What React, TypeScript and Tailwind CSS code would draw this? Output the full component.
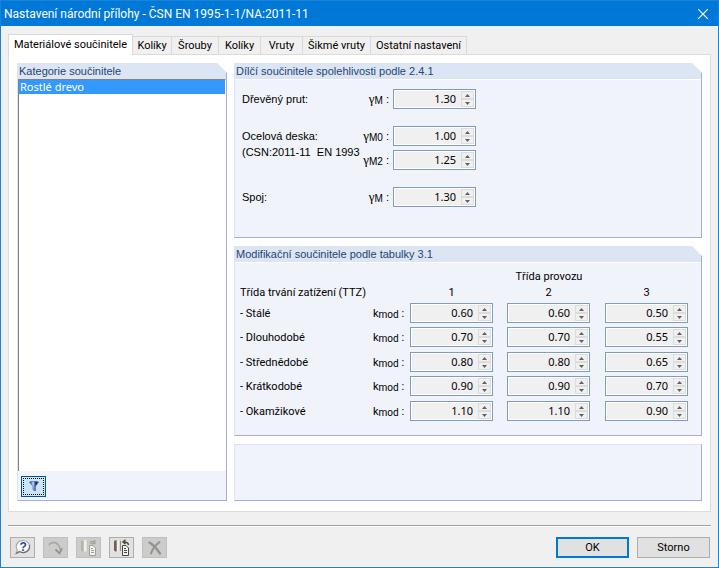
import { useState } from 'react'
import type { ReactNode } from 'react'

const tabs = [
  { label: 'Kolíky', w: 'w-[39px]' },
  { label: 'Šrouby', w: 'w-[47px]' },
  { label: 'Kolíky', w: 'w-[42px]' },
  { label: 'Vruty', w: 'w-[42px]' },
  { label: 'Šikmé vruty', w: 'w-[68px]' },
  { label: 'Ostatní nastavení', w: 'w-[96px]' },
]

const kmod = [
  { label: 'Stálé', vals: ['0.60', '0.60', '0.50'] },
  { label: 'Dlouhodobé', vals: ['0.70', '0.70', '0.55'] },
  { label: 'Střednědobé', vals: ['0.80', '0.80', '0.65'] },
  { label: 'Krátkodobé', vals: ['0.90', '0.90', '0.70'] },
  { label: 'Okamžikové', vals: ['1.10', '1.10', '0.90'] },
]

const SpinField = ({ id, initial, label }: { id: string; initial: string; label?: string }) => {
  const [val, setVal] = useState(initial)
  const step = (d: number) => setVal(v => (Number(v) + d).toFixed(2))
  return (
    <div className="flex h-5 w-[83px] border border-[#7f9db9] bg-[#f0f0f0] p-px outline outline-1 -outline-offset-2 outline-white">
      <input id={id} aria-label={label} value={val} onChange={e => setVal(e.target.value)}
        className="min-w-0 flex-1 bg-transparent pr-[5px] text-right font-['Noto_Sans',sans-serif] outline-none" />
      <div className="flex w-[13px] flex-col border border-[#dcdcdc] bg-[#f0f0f0]">
        <button type="button" aria-label="+" onClick={() => step(0.05)} className="flex flex-1 items-center justify-center border-b border-[#dcdcdc]">
          <svg width="5" height="3" viewBox="0 0 5 3" fill="#606060"><path d="M2.5 0 5 3H0z" /></svg>
        </button>
        <button type="button" aria-label="-" onClick={() => step(-0.05)} className="flex flex-1 items-center justify-center border-t border-[#dcdcdc]">
          <svg width="5" height="3" viewBox="0 0 5 3" fill="#606060"><path d="M0 0h5L2.5 3z" /></svg>
        </button>
      </div>
    </div>
  )
}

const Panel = ({ title, className = '', children }: { title: string; className?: string; children: ReactNode }) => (
  <section className={`flex flex-col border-r border-b border-l border-[#a9a9e8] border-l-[#dce5f3] bg-[#f0f3f9] [clip-path:polygon(0_0,calc(100%-10px)_0,100%_10px,100%_100%,0_100%)] ${className}`}>
    <h2 className="h-4 bg-[#dce5f4] px-px font-['Liberation_Sans',sans-serif] leading-4 text-[#1e4670]">{title}</h2>
    {children}
  </section>
)

const GammaRow = ({ id, sub, val }: { id: string; sub: string; val: string }) => (
  <div className="flex">
    <label htmlFor={id} className="flex h-5 w-8 items-center justify-end pr-1">
      <span className="font-['Liberation_Serif',serif] text-[13px]">γ</span>
      <span className="pt-1 font-['Liberation_Sans',sans-serif] text-[10px]">{sub}</span>
      <span className="pl-[3px]">:</span>
    </label>
    <SpinField id={id} initial={val} />
  </div>
)

const ToolButton = ({ label, disabled, children }: { label: string; disabled?: boolean; children: ReactNode }) => (
  <button type="button" aria-label={label} disabled={disabled}
    className="flex h-[21px] w-[25px] items-center justify-center border border-[#adadad] bg-[#e1e1e1] disabled:border-[#bfbfbf] disabled:bg-[#cccccc]">
    {children}
  </button>
)

const DbIcon = ({ id, edge, line, back }: { id: string; edge: string; line: string; back?: boolean }) => (
  <svg width="17" height="17" viewBox="0 0 17 17" fill="none">
    <defs>
      <linearGradient id={id}>
        <stop offset="0" stopColor={edge} />
        <stop offset=".3" stopColor={edge} />
        <stop offset=".5" stopColor="#f2eee4" />
        <stop offset=".75" stopColor="#f2eee4" />
        <stop offset="1" stopColor={edge} />
      </linearGradient>
    </defs>
    <path d="M1 2.5Q1 1 4.5 1T8 2.5v8.500Q8 12.500 4.500 12.500T1 11z" fill={`url(#${id})`} />
    <path d="M9.500 6.500h3.500l2.500 2.500v7.500h-6z" fill="#f3f3ee" stroke={line} />
    <path d="M11 9.500h2M11 11.500h3M11 13.500h3" stroke={line} />
    {back
      ? <path d="M15.500 6Q15 2.500 10 3M12.500 .8 10 3l2.500 2" stroke={line} strokeWidth="1.5" />
      : <path d="M10 4.500Q11 1.500 14 3M14.800 1v3.700h-3.300" stroke={line} strokeWidth="1.3" />}
  </svg>
)

export default function App() {
  return (
    <div className="flex min-h-screen flex-col border border-[#1883d7] bg-[#f0f0f0] font-[Roboto,sans-serif] text-[11px] leading-4 text-black">
      <header className="flex h-[25px] items-center justify-between bg-[#0078d7] pr-[10px] pl-[3px] text-white">
        <h1 className="text-[12px]">Nastavení národní přílohy - ČSN EN 1995-1-1/NA:2011-11</h1>
        <button type="button" aria-label="Zavřít">
          <svg width="10" height="10" viewBox="0 0 10 10" stroke="#fff" strokeWidth="1.2"><path d="M0 0l10 10M10 0 0 10" /></svg>
        </button>
      </header>

      <main className="flex flex-1 flex-col px-[7px] pt-2">
        {/* tabs */}
        <nav className="flex items-end" role="tablist">
          <button type="button" role="tab" aria-selected="true" className="z-10 -mb-px h-[21px] w-[125px] border border-b-0 border-[#d9d9d9] bg-white whitespace-nowrap">
            Materiálové součinitele
          </button>
          {tabs.map(({ label, w }, i) => (
            <button key={i} type="button" role="tab" aria-selected="false" className={`h-[18px] border-t border-r border-[#d9d9d9] pt-px whitespace-nowrap ${w}`}>
              {label}
            </button>
          ))}
        </nav>

        <div className="flex flex-1 gap-[7px] border border-[#dcdcdc] bg-white px-2 pt-2 pb-[10px]">
          <Panel title="Kategorie součinitele" className="w-[210px] shrink-0">
            <ul role="listbox" className="flex-1 border-t border-r border-l border-[#828282] border-r-white bg-white">
              <li role="option" aria-selected="true" className="h-[14px] bg-[#3399ff] pl-px font-['Noto_Sans',sans-serif] leading-[14px] text-white">Rostlé drevo</li>
            </ul>
            <div className="px-[3px] pt-[5px] pb-[3px]">
              <button type="button" aria-label="Filtr" className="flex h-[21px] w-[25px] items-center justify-center border border-[#005499] bg-[#cce4f7] outline-1 -outline-offset-3 outline-black outline-dotted">
                <svg width="10" height="11" viewBox="0 0 10 11">
                  <defs>
                    <linearGradient id="funnel">
                      <stop offset=".1" stopColor="#2c57b8" />
                      <stop offset=".4" stopColor="#c6dcfa" />
                      <stop offset=".7" stopColor="#142a66" />
                    </linearGradient>
                  </defs>
                  <path d="M.5 1Q5-.5 9.5 1L6.3 5.5V10L4 8.8V5.5z" fill="url(#funnel)" stroke="#34559a" strokeWidth=".6" />
                </svg>
              </button>
            </div>
          </Panel>

          <div className="flex flex-1 flex-col gap-2">
            <Panel title="Dílčí součinitele spolehlivosti podle 2.4.1">
              <div className="flex flex-col gap-[17px] border-t border-white px-[7px] pt-[9px] pb-[30px] font-['Liberation_Sans',sans-serif]">
                <div className="flex">
                  <div className="w-[119px] pt-[2px]">Dřevěný prut:</div>
                  <GammaRow id="prut" sub="M" val="1.30" />
                </div>
                <div className="flex">
                  <div className="w-[119px] pt-[2px] whitespace-pre">
                    <div>Ocelová deska:</div>
                    <div>(CSN:2011-11  EN 1993</div>
                  </div>
                  <div className="flex flex-col gap-1">
                    <GammaRow id="deska0" sub="M0" val="1.00" />
                    <GammaRow id="deska2" sub="M2" val="1.25" />
                  </div>
                </div>
                <div className="flex">
                  <div className="w-[119px] pt-[2px]">Spoj:</div>
                  <GammaRow id="spoj" sub="M" val="1.30" />
                </div>
              </div>
            </Panel>

            <Panel title="Modifikační součinitele podle tabulky 3.1">
              <div className="border-t border-white px-[5px] pt-[6px] pb-[10px]">
                <table className="table-fixed border-collapse text-left">
                  <colgroup>
                    <col className="w-[133px]" />
                    <col className="w-[37px]" />
                    <col className="w-[97px]" />
                    <col className="w-[98px]" />
                    <col className="w-[83px]" />
                  </colgroup>
                  <thead>
                    <tr className="h-4">
                      <td colSpan={2} />
                      <th colSpan={3} className="p-0 text-center font-normal">Třída provozu</th>
                    </tr>
                    <tr className="h-[18px] align-top">
                      <th colSpan={2} className="p-0 font-normal">Třída trvání zatížení (TTZ)</th>
                      {['1', '2', '3'].map(n => (
                        <th key={n} className="p-0 font-normal"><span className="block w-[83px] text-center">{n}</span></th>
                      ))}
                    </tr>
                  </thead>
                  <tbody>
                    {kmod.map(({ label, vals }, r) => (
                      <tr key={label} className="h-6 align-top even:h-[25px]">
                        <th className="p-0 pt-[3px] font-normal">- {label}</th>
                        <td className="p-0 pt-[3px] whitespace-nowrap">
                          k<span className="relative top-px text-[10px]">mod</span> :
                        </td>
                        {vals.map((v, c) => (
                          <td key={c} className="p-0"><SpinField id={`kmod-${r}-${c}`} label={`${label} ${c + 1}`} initial={v} /></td>
                        ))}
                      </tr>
                    ))}
                  </tbody>
                </table>
              </div>
            </Panel>

            <section className="flex-1 border border-[#a9a9e8] border-t-[#dce5f3] border-l-[#dce5f3] bg-[#f0f3f9]" />
          </div>
        </div>

        <div className="mt-[13px] h-[2px] border-t border-[#a0a0a0] bg-white" />

        <footer className="flex items-center gap-2 pt-[10px] pr-px pb-[9px] pl-[2px]">
          <ToolButton label="Nápověda">
            <svg width="17" height="17" viewBox="0 0 17 17">
              <path d="M9 1.500a6.500 6 0 1 1-3.500 11L2 14.500l1.500-3.500A6.300 6 0 0 1 9 1.500z" fill="#fafafa" stroke="#a8a8a8" strokeWidth="1.200" />
              <path d="M15.300 6A6.500 6 0 0 1 5.500 12.600L2 14.500" fill="none" stroke="#6f6f6f" strokeWidth="1.200" />
              <text x="5.500" y="12" fontSize="12" fontWeight="bold" fill="#2f4896" fontFamily="Liberation Sans">?</text>
            </svg>
          </ToolButton>
          <ToolButton label="Převzít" disabled>
            <svg width="16" height="16" viewBox="0 0 16 16" fill="none">
              <path d="M1 5Q9-1 12 10" stroke="#aaaaa2" strokeWidth="2.600" />
              <path d="M2 5.300Q9 1 11 10" stroke="#dadad2" />
              <path d="M7.500 9.500l4 3.800 2.500-5" stroke="#92928a" strokeWidth="1.800" />
            </svg>
          </ToolButton>
          <ToolButton label="Uložit jako výchozí" disabled><DbIcon id="dbSave" edge="#b3b3a8" line="#a09f95" /></ToolButton>
          <ToolButton label="Načíst výchozí"><DbIcon id="dbLoad" edge="#6e6058" line="#484848" back /></ToolButton>
          <ToolButton label="Smazat" disabled>
            <svg width="16" height="16" viewBox="0 0 16 16" fill="none" stroke="#94948c" strokeLinecap="round">
              <path d="M2.500 2.500Q8 6 13 13.500" strokeWidth="2.400" />
              <path d="M12.500 2Q6.500 6.500 4 13.500" strokeWidth="2" />
            </svg>
          </ToolButton>
          <button type="button" className="ml-auto h-[21px] w-[73px] border-2 border-[#0078d7] bg-[#e1e1e1]">OK</button>
          <button type="button" className="h-[21px] w-[73px] border border-[#adadad] bg-[#e1e1e1]">Storno</button>
        </footer>
      </main>
    </div>
  )
}
